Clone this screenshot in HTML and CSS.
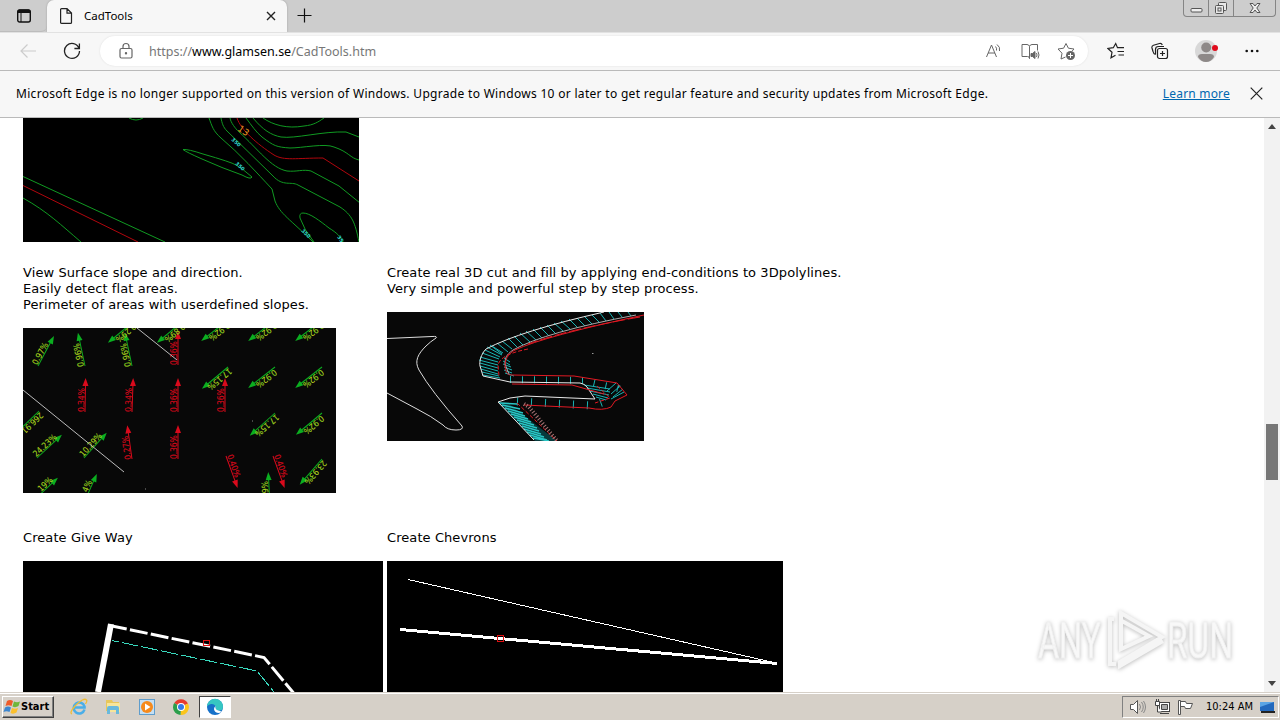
FILE: index.html
```html
<!DOCTYPE html>
<html lang="en">
<head>
  <meta charset="UTF-8">
  <meta name="viewport" content="width=device-width, initial-scale=1.0">
  <title>CadTools</title>
  <link rel="stylesheet" href="styles.css">
</head>
<body>
  <!-- Tabs -->
  <header class="tab-bar">
    <div class="tab-actions">
      <svg width="16" height="16" viewBox="0 0 16 16"><rect x="1.7" y="2" width="12.6" height="12" rx="2" fill="none" stroke="#111" stroke-width="1.4"/><path d="M1.5 5V3.5Q1.500 1.500 3.500 1.500h9q2 0 2 2V5z" fill="#111"/><path d="M5 5v9" stroke="#111"/></svg>
    </div>
    <div class="tab">
      <svg width="14" height="18" viewBox="0 0 14 18" fill="none" stroke="#222" stroke-width="1.2"><path d="M1.600 2.600q0-1 1-1H8l4.500 4.500v9.300q0 1-1 1H2.600q-1 0-1-1zM8 1.600v4.500h4.500"/></svg>
      <span class="tab-title">CadTools</span>
      <svg class="tab-close" width="10" height="10" viewBox="0 0 10 10" stroke="#222" stroke-width="1.4"><path d="M1 1l8 8M9 1l-8 8"/></svg>
    </div>
    <svg class="tab-new" width="15" height="15" viewBox="0 0 15 15" stroke="#111" stroke-width="1.2"><path d="M7.500 .5v14M.5 7.500h14"/></svg>
    <div class="window-buttons">
      <span class="win-btn"><svg width="14" height="16" viewBox="0 0 14 16"><rect x="2" y="8.500" width="11" height="3.500" rx="1" fill="#eee" stroke="#555"/></svg></span>
      <span class="win-btn"><svg width="14" height="16" viewBox="0 0 14 16" fill="#e8e8e8" stroke="#555"><rect x="4.500" y="2.500" width="8" height="8" rx="1"/><rect x="1.500" y="5.500" width="8" height="8" rx="1"/><rect x="4" y="8" width="3" height="3"/></svg></span>
      <span class="win-btn win-btn-close"><svg width="12" height="16" viewBox="0 0 12 16"><path d="M1 3.500h3l2 2.500 2-2.500h3L7.800 8l3.200 4.500H8L6 10l-2 2.500H1L4.200 8z" fill="#eee" stroke="#555"/></svg></span>
    </div>
  </header>

  <!-- Toolbar -->
  <nav class="toolbar">
    <svg class="back" width="18" height="16" viewBox="0 0 18 16" fill="none" stroke="#ccc" stroke-width="1.200"><path d="M17 8H2M8.500 1.500L2 8l6.500 6.500"/></svg>
    <svg class="reload" width="18" height="18" viewBox="0 0 18 18" fill="none" stroke="#222" stroke-width="1.300"><path d="M16 6.200A7.500 7.500 0 1 0 16.500 9M16.400 1.500v5h-5"/></svg>
    <div class="address">
      <svg width="14" height="18" viewBox="0 0 14 18" fill="none" stroke="#666" stroke-width="1.200"><rect x="1" y="6.500" width="12" height="9.500" rx="1.500"/><path d="M4 6.500V4.500a3 3 0 0 1 6 0v2"/><circle cx="7" cy="11.300" r=".6" fill="#666"/></svg>
      <span class="url">https://<b>www.glamsen.se</b>/CadTools.htm</span>
      <svg class="read-aloud" width="17" height="16" viewBox="0 0 17 16" fill="none" stroke="#666"><path d="M1.500 14L6.500 2 11.500 14M3 10h7M10.500 3.500q1.500 1.500 1 4M12 1.500q3.500 2.500 2.500 6.500"/></svg>
      <svg class="reader" width="19" height="17" viewBox="0 0 19 17" fill="none" stroke="#666"><path d="M8.500 3.500Q8 1.500 6 1.500H1v12h5.500q2 0 2 2V3.500Q9 1.500 11 1.500h5.500v6M8.500 15.500v-2"/><path d="M10 10.500h1.500L14 8.500v7l-2.500-2H10z" fill="#666"/><path d="M15.500 10q1 2 0 4M17 8.500q2 3.500 0 7"/></svg>
      <svg class="add-fav" width="19" height="19" viewBox="0 0 19 19" fill="none" stroke="#666"><path d="M8.500 15L4 17l1-5.800L1 7l5.600-.8L9 1.500l2.400 4.700L17 7l-2 2.200"/><circle cx="13.500" cy="13.500" r="4.500" fill="#666" stroke="none"/><path d="M13.500 11v5M11 13.500h5" stroke="#fff"/></svg>
    </div>
    <svg class="favorites" width="18" height="18" viewBox="0 0 18 18" fill="none" stroke="#222" stroke-width="1.200"><path d="M8.500 13.300L4 15.800l1-5.500L1 6.500l5.300-.8L8.700 1.500l1.800 4.200H17M10.500 9.500H17M11.500 13H17"/></svg>
    <svg class="collections" width="18" height="18" viewBox="0 0 18 18" fill="none" stroke="#222" stroke-width="1.200"><rect x="6.500" y="6.500" width="10" height="10" rx="2"/><path d="M11.500 9v5M9 11.500h5M4.500 12.500Q2.500 12 2 9.500L1 6q-.5-2 1.500-2.700l6-1.800q2-.5 2.800 1.500M4.500 12.500V7.500q0-3 3-3H13"/></svg>
    <svg class="profile" width="24" height="24" viewBox="0 0 24 24"><circle cx="11" cy="12" r="11" fill="#d8d8d8"/><circle cx="11.200" cy="8.500" r="5" fill="#8e8988"/><path d="M3 18q0-3 4-3h8q4 0 4 3-3 5-8 5t-8-5" fill="#8e8988"/><circle cx="20" cy="9" r="3" fill="#e00b1c"/></svg>
    <svg class="more" width="14" height="4" viewBox="0 0 14 4" fill="#111"><circle cx="1.700" cy="2" r="1.300"/><circle cx="7" cy="2" r="1.300"/><circle cx="12.300" cy="2" r="1.300"/></svg>
  </nav>

  <!-- Info bar -->
  <div class="info-bar">
    <p class="info-text">Microsoft Edge is no longer supported on this version of Windows. Upgrade to Windows 10 or later to get regular feature and security updates from Microsoft Edge.</p>
    <a class="info-link" href="#">Learn more</a>
    <svg width="13" height="13" viewBox="0 0 13 13" stroke="#222" stroke-width="1.200"><path d="M.7.7l11.600 11.600M12.300.7L.7 12.300"/></svg>
  </div>

  <!-- Web page -->
  <div class="viewport">
    <main class="page">
      <section class="feature-row">
        <svg class="cad contour" width="336" height="124" viewBox="23 118 336 124" fill="none" stroke="#109a22">
          <path d="M129 118q7 4 14 0M183 149.500q5-.5 20 4.500 28 8 33 11 7 4 16 12-1 3-10-2-20-7-40-16-16-7-19-9.500zM209 118c3 8 4 13 12 20 19 16 36 35 51 51l3 12c5 13 15 18 38 41M221 118c1 5 2 9 6 13l46 45c10 11 18 5 25 9l42 22c12 8 15 15 19 35M230 118c1 5 5 10 9 14 19 17 32 36 48 39 10 1 16-2 24 0l28 15 21 17M246 118c6 8 10 14 16 19 12 9 14 10 28 11 12 0 35-5 44-1 15 5 16 11 25 13M253 118c10 12 18 17 28 19 14 2 42-6 65-5l13 5M263 118c10 7 24 11 41 8 10-1 14-4 20-8M23 176.500l142 65.500M23 198c25 14 38 27 58 44M314 242q-10-12-14-24-1-5 3-5c7 0 17 8 26 15 8 5 11 8 14 14"/>
          <path stroke="#b0060d" d="M237 118c4 12 20 26 37 37 10 6 23 3 49 3l36 23M23 185.500L138 242"/>
          <g class="contour-label"><text transform="translate(237 130) rotate(35)" class="label-big">13</text><text transform="translate(231 140) rotate(42)">350</text><text transform="translate(235 164) rotate(42)">350</text><text transform="translate(301 231) rotate(45)">350</text><text transform="translate(337 237) rotate(55)">35</text></g>
        </svg>
      </section>

      <section class="feature-row">
        <article class="feature">
          <p>View Surface slope and direction.<br>Easily detect flat areas.<br>Perimeter of areas with userdefined slopes.</p>
          <svg class="cad slope" width="313" height="165" viewBox="23 328 313 165">
            <defs>
              <g id="arrow"><path d="M0 0H28" stroke="currentColor"/><path d="M34 0l-8-3v6z" fill="currentColor"/></g>
            </defs>
            <g class="low">
              <g transform="translate(178 365) rotate(-90)"><use href="#arrow"/><text x="0" y="-1">0.36%</text></g>
              <g transform="translate(85 412) rotate(-89)"><use href="#arrow"/><text x="0" y="-1">0.34%</text></g>
              <g transform="translate(132 412) rotate(-88)"><use href="#arrow"/><text x="0" y="-1">0.34%</text></g>
              <g transform="translate(178 412) rotate(-90)"><use href="#arrow"/><text x="0" y="-1">0.36%</text></g>
              <g transform="translate(225 412) rotate(-90)"><use href="#arrow"/><text x="0" y="-1">0.36%</text></g>
              <g transform="translate(132 459) rotate(-98)"><use href="#arrow"/><text x="0" y="-1">0.27%</text></g>
              <g transform="translate(178 459) rotate(-90)"><use href="#arrow"/><text x="0" y="-1">0.36%</text></g>
              <g transform="translate(226 456) rotate(70)"><use href="#arrow"/><text x="0" y="-1">0.40%</text></g>
              <g transform="translate(273 456) rotate(70)"><use href="#arrow"/><text x="0" y="-1">0.40%</text></g>
            </g>
            <g class="high">
              <g transform="translate(38 366) rotate(-62)"><use href="#arrow"/><text x="0" y="-1">0.97%</text></g>
              <g transform="translate(85 366) rotate(-102)"><use href="#arrow"/><text x="0" y="-1">0.96%</text></g>
              <g transform="translate(132 366) rotate(-102)"><use href="#arrow"/><text x="0" y="-1">0.96%</text></g>
              <g transform="translate(134 321) rotate(140)"><use href="#arrow"/><text x="2" y="-1">0.29%</text></g>
              <g transform="translate(183 321) rotate(140)"><use href="#arrow"/><text x="2" y="-1">0.89%</text></g>
              <g transform="translate(228 320) rotate(142)"><use href="#arrow"/><text x="2" y="-1">0.92%</text></g>
              <g transform="translate(275 320) rotate(142)"><use href="#arrow"/><text x="2" y="-1">0.92%</text></g>
              <g transform="translate(322 320) rotate(142)"><use href="#arrow"/><text x="2" y="-1">0.92%</text></g>
              <g transform="translate(228 367) rotate(140)"><use href="#arrow"/><text x="0" y="-1">17.15%</text></g>
              <g transform="translate(275 367) rotate(142)"><use href="#arrow"/><text x="2" y="-1">0.92%</text></g>
              <g transform="translate(322 367) rotate(142)"><use href="#arrow"/><text x="2" y="-1">0.92%</text></g>
              <g transform="translate(275 413) rotate(138)"><use href="#arrow"/><text x="0" y="-1">17.15%</text></g>
              <g transform="translate(322 413) rotate(140)"><use href="#arrow"/><text x="2" y="-1">0.92%</text></g>
              <g transform="translate(322 459) rotate(131)"><use href="#arrow"/><text x="0" y="-1">23.93%</text></g>
              <g transform="translate(39 411) rotate(136)"><use href="#arrow"/><text x="0" y="-1">266.91</text></g>
              <g transform="translate(37 458) rotate(-43)"><use href="#arrow"/><text x="0" y="-1">24.23%</text></g>
              <g transform="translate(84 458) rotate(-48)"><use href="#arrow"/><text x="0" y="-1">10.29%</text></g>
              <g transform="translate(33 501) rotate(-43)"><use href="#arrow"/><text x="12" y="-1">19%</text></g>
              <g transform="translate(83 505) rotate(-66)"><use href="#arrow"/><text x="13" y="-1">4%</text></g>
              <g transform="translate(270 506) rotate(-93)"><use href="#arrow"/><text x="13" y="-1">9%</text></g>
            </g>
            <path d="M137 328l40 32M23 390l101 82" stroke="#bbb" fill="none"/>
            <path d="M145 489h1M252 421h1" stroke="#888"/>
          </svg>
        </article>
        <article class="feature">
          <p>Create real 3D cut and fill by applying end-conditions to 3Dpolylines.<br>Very simple and powerful step by step process.</p>
          <svg class="cad slope" width="257" height="129" viewBox="387 312 257 129" fill="none">
            <path d="M387 338.500l45-2q6-.5 4 1.500-6 4-10 8c-8 8-12 15-7 24q12 21 43 56 2 4-6 4-9 0-13-5-12-9-26-16L387 393" stroke="#ddd"/>
            <!-- hatching between the outer and inner edges -->
            <path d="M492 346L503 353M497 343l11 9M502 341l10 8M508 338l9 9M514 336l9 9M520 333l10 9M526 331l10 9M533 329l9 9M540 327l9 9M547 325l9 9M554 323l9 8M561 321l9 8M569 319l8 8M577 318l8 8M584 316l8 8M592 315l7 7M600 313l6 8M609 312l5 7M618 312l4 5M628 312l3 4" stroke="#19b4b4"/>
            <path d="M482 353L499 359M480 357l18 5M479 360l19 5M480 363l18 5M480 366l18 5M481 369l17 5M482 372l17 4M483 375l17 3M485 350l15 7M487 347l15 8M490 345l12 9M504 358l6 4M503 361l7 4M503 364l8 3M504 367l8 3M504 370l8 3M505 373l9 3" stroke="#19b4b4"/>
            <path d="M510 379.500l73 1 35 8 5 6" stroke="#19b4b4" stroke-width="7" stroke-dasharray="1 11"/>
            <path d="M517 401.500l77 4 16-6" stroke="#19b4b4" stroke-width="8" stroke-dasharray="1 13"/>
            <path d="M584 385l26 4M587 388l23 4M590 391l19 4M593 394l15 4M596 397l10 3M607 391l9-8M611 394l9-8M613 397l10-8M611 399l13-7" stroke="#19b4b4"/>
            <path d="M498 402L508 403 557 441H535z" fill="#073b3d"/>
            <path d="M499 403l18 1M502 405l18 4M505 408l18 5M508 411l17 5M511 414l17 5M514 417l17 5M517 420l17 5M519 423l18 5M522 426l17 5M524 429l17 5M527 432l17 5M530 435l17 5M533 438l16 3" stroke="#28c5c4" stroke-width="1.500"/>
            <path d="M604 312Q520 331 486 349c-5 5-7 13-6 17l3 10 27 6" stroke="#e9e9e9"/>
            <path d="M510 382l70 1q5 1 7 4l8 12-70-3-15 2-12 4 36 38" stroke="#e9e9e9"/>
            <path d="M636 315Q545 332 513 350c-7 5-8 8-8 14l4 10" stroke="#aaa"/>
            <path d="M644 315Q545 336 515 350c-8 4-10 11-10 16 1 8 3 9 7 9l62 1 37 6 6 1 10 12-12 6-4 6q-8 4-22 1l-65-3M512 384l60 1 32 9" stroke="#e01923"/>
            <path d="M640 317Q570 329 528 344" stroke="#e01923" stroke-dasharray="12 3"/>
            <path d="M528 349c-20 4-28 9-30 16l1 11M517 403l40 38M597 386l13 12-15 5" stroke="#e01923" stroke-dasharray="4 2"/>
            <path d="M524 404l5 3 28 34" stroke="#a77" stroke-width="4" stroke-dasharray="1 2"/>
            <path d="M592 353.500h1.500" stroke="#999"/>
          </svg>
        </article>
      </section>

      <section class="feature-row feature-row-last">
        <article class="feature">
          <p>Create Give Way</p>
          <svg class="cad" width="360" height="131" viewBox="23 561 360 131" fill="none">
            <path d="M111 624l-13 68" stroke="#fff" stroke-width="6"/>
            <path d="M112 626L264 657.500l30 36" stroke="#fff" stroke-width="3" stroke-dasharray="18 3.300" stroke-dashoffset="3"/>
            <path d="M112 640.500L257 671l17 21" stroke="#38d8bd" stroke-dasharray="17 3" stroke-dashoffset="10" shape-rendering="crispEdges"/>
            <rect x="203.500" y="640.500" width="6" height="5" stroke="#d11"/>
          </svg>
        </article>
        <article class="feature">
          <p>Create Chevrons</p>
          <svg class="cad" width="396" height="131" viewBox="387 561 396 131" fill="none">
            <path d="M408 579.500l368 83.500" stroke="#fff" shape-rendering="crispEdges"/>
            <path d="M400 629.500l377 34" stroke="#fff" stroke-width="3" shape-rendering="crispEdges"/>
            <rect x="497.500" y="635.500" width="6" height="6" stroke="#d11"/>
          </svg>
        </article>
      </section>
    </main>
    <aside class="scrollbar">
      <span class="scroll-up"></span>
      <span class="scroll-thumb"></span>
      <span class="scroll-down"></span>
    </aside>
    <svg class="watermark" width="210" height="76" viewBox="1030 604 210 76" fill="none">
      <g class="watermark-text"><text x="1038" y="658" textLength="63" lengthAdjust="spacingAndGlyphs">ANY</text><text x="1167" y="658" textLength="66" lengthAdjust="spacingAndGlyphs">RUN</text></g>
      <path class="watermark-mark" d="M1121 649V613l41 24-42 25v4l43-25M1121 613v36l28-13-27-15M1114 619h-4v45h6"/>
    </svg>
  </div>

  <!-- Taskbar -->
  <footer class="taskbar">
    <button class="start">
      <svg width="18" height="17" viewBox="0 0 18 17"><path d="M4 3q3-2 6 0L8.500 8q-3-1.500-6 0z" fill="#ef5b2a"/><path d="M11 3.500q3 1.500 6 0L15.500 8q-3 2-6 .5z" fill="#6fb73c"/><path d="M2 9.500q3-2 6 0L6.500 14q-3-1.500-6 0z" fill="#3d86cf"/><path d="M9 10q3 1.500 6 0l-1.500 4.500q-3 2-6 .5z" fill="#fbc02d"/></svg>
      Start
    </button>
    <div class="quick-launch">
      <svg width="18" height="18" viewBox="0 0 18 18" fill="none"><path d="M14.500 11.500A5.500 5.500 0 1 1 14.500 8.500v1H5" stroke="#4aaee8" stroke-width="2.600"/><path d="M2 16Q-1 15 5 8 14-1 16.500 2q1 1-1 4" stroke="#f0bd35" stroke-width="1.300"/></svg>
      <svg width="18" height="18" viewBox="0 0 18 18"><path d="M2 2h6l1 2h6v9H2z" fill="#e8c75b"/><path d="M3 5h13v9H3z" fill="#f7e59a"/><path d="M3 10q0-2 2-2h8q2 0 2 2v6h-3v-4H6v4H3z" fill="#69b9dc"/></svg>
      <svg width="18" height="18" viewBox="0 0 18 18"><rect x="1.500" y="1.500" width="15" height="15" fill="#c5dff3" stroke="#5f9dcc"/><circle cx="9" cy="9" r="6" fill="#f68a1c"/><path d="M7 5.500L12.500 9 7 12.500z" fill="#fff"/></svg>
      <svg width="18" height="18" viewBox="0 0 18 18"><path d="M9 9L2.200 5A7.900 7.900 0 0 1 16 5.500z" fill="#e63c2f"/><path d="M9 9l7-3.500A7.900 7.900 0 0 1 8.500 17z" fill="#fbc51b"/><path d="M9 9l-.5 8A7.900 7.900 0 0 1 2.200 5z" fill="#2b9e4b"/><circle cx="9" cy="9" r="4" fill="#fff"/><circle cx="9" cy="9" r="3" fill="#347be8"/></svg>
      <span class="task-active">
        <svg width="18" height="18" viewBox="0 0 18 18"><circle cx="9" cy="9" r="8" fill="#1671c9"/><path d="M1 8.500A8 8 0 0 1 17 9q-.5 4-4.500 3.500-4 0-2.500-3-1-4-5-3.500-3 .5-4 2.500" fill="#36c7c2"/><path d="M9.500 8q-3 3 0 6 3 2 6 0-1-1.500-3-1.500-3.500-.5-3-4.500" fill="#fff"/></svg>
      </span>
    </div>
    <div class="tray">
      <svg width="18" height="16" viewBox="0 0 18 16" fill="#fff" stroke="#555"><path d="M1.500 5.500h3l4-4v13l-4-4h-3z"/><path d="M10.500 5q2 3 0 6M12.500 3q3.500 5 0 10M14.500 2q4 6 0 12" fill="none" stroke="#888"/></svg>
      <svg width="16" height="16" viewBox="0 0 16 16" fill="#fff" stroke="#444"><rect x="5.500" y="3.500" width="10" height="9"/><path d="M7.500 5.500h6v5h-6z" fill="#aaa"/><path d="M6 14.500h9M1.500 2.500h4v4h-4zM2.500 0v3M4.500 0v3M3.500 7v6h4"/></svg>
      <svg width="16" height="16" viewBox="0 0 16 16" fill="#fff" stroke="#555"><path d="M1.500 1.500h2v14h-2zM3.500 2.500h5l1 2h6l-2 5h-5l-1-2h-4z"/></svg>
      <span class="clock">10:24 AM</span>
      <svg width="15" height="14" viewBox="0 0 15 14"><path d="M0 2h14v9H0z" fill="#2369bd"/><path d="M0 2h14L0 7z" fill="#5ba5e5"/><path d="M1 12h14" stroke="#222" stroke-width="2"/></svg>
    </div>
  </footer>
</body>
</html>
```
FILE: styles.css
```css
:root {
  --chrome: #f7f7f7;
  --tabs: #cdcdcd;
  --taskbar: #d6d0c8;
  --ui-font: "Noto Sans", "Open Sans", sans-serif;
}
* {
  margin: 0;
  padding: 0;
  box-sizing: border-box;
}
body {
  width: 1280px;
  height: 720px;
  overflow: hidden;
  display: flex;
  flex-direction: column;
  background: #fff;
  font-family: var(--ui-font);
  color: #000;
}
svg {
  display: block;
  flex: none;
}
.tab-bar {
  height: 32px;
  flex: none;
  display: flex;
  background: var(--tabs);
}
.tab-actions {
  width: 47px;
  padding: 8px 0 0 16px;
  border-bottom: 1px solid #bdbdbd;
  border-bottom-right-radius: 6px;
}
.tab {
  width: 240px;
  height: 32px;
  display: flex;
  align-items: center;
  padding: 0 11px 0 12px;
  background: var(--chrome);
  border-radius: 7px 7px 0 0;
  box-shadow: 0 0 2px #999;
  clip-path: inset(0 -3px 0 -3px);
}
.tab-title {
  margin-left: 11px;
  padding-bottom: 2px;
  font-size: 11.5px;
}
.tab-close {
  margin-left: auto;
}
.tab-new {
  margin: 8px 0 0 10px;
}
.window-buttons {
  display: flex;
  height: 17px;
  margin: 0 4px 0 auto;
  border: 1px solid #858585;
  border-top: 0;
  border-radius: 0 0 4px 4px;
}
.win-btn {
  width: 25px;
  display: flex;
  justify-content: center;
  border-right: 1px solid #858585;
}
.win-btn-close {
  width: 41px;
  border-right: 0;
}
.toolbar {
  height: 39px;
  flex: none;
  display: flex;
  align-items: center;
  padding-bottom: 1px;
  background: var(--chrome);
  border-top: 1px solid #e2e2e2;
  border-bottom: 1px solid #bababa;
}
.back {
  margin-left: 19px;
}
.reload {
  margin-left: 26px;
}
.address {
  width: 988px;
  height: 30px;
  margin-left: 19px;
  padding: 0 12px 0 19px;
  display: flex;
  align-items: center;
  background: #fff;
  border-radius: 16px;
  box-shadow: 0 0 2px #ddd;
}
.url {
  margin-left: 16px;
  font-size: 12.5px;
  color: #777;
}
.url b {
  font-weight: 400;
  color: #000;
}
.read-aloud {
  margin-left: auto;
}
.reader {
  margin-left: 19px;
}
.add-fav {
  margin-left: 17px;
}
.favorites {
  margin-left: 19px;
}
.collections {
  margin-left: 26px;
}
.profile {
  margin-left: 26px;
}
.more {
  margin-left: 26px;
}
.info-bar {
  height: 47px;
  flex: none;
  display: flex;
  align-items: center;
  padding: 0 17px 1px 16px;
  background: var(--chrome);
  border-bottom: 1px solid #bababa;
  font-size: 12px;
}
.info-text {
  padding-bottom: 1px;
  letter-spacing: 0.305px;
  white-space: nowrap;
}
.info-link {
  margin: 0 20px 0 auto;
  padding-bottom: 1px;
  letter-spacing: 0.2px;
  color: #0067b0;
}
.viewport {
  position: relative;
  height: 574px;
  flex: none;
  display: flex;
  overflow: hidden;
}
.page {
  flex: 1;
  padding-left: 23px;
  font-family: Verdana, "DejaVu Sans", sans-serif;
  font-size: 13px;
  letter-spacing: 0.08px;
  line-height: 16px;
}
.feature-row {
  display: grid;
  grid-template-columns: 360px 1fr;
  column-gap: 4px;
  align-items: start;
  margin-bottom: 22px;
}
.feature-row + .feature-row {
  margin-bottom: 36px;
}
.feature p {
  padding-top: 1px;
  margin-bottom: 15px;
  white-space: nowrap;
}
.cad {
  background: #000;
}
.slope {
  background: #080808;
}
.contour-label {
  font: bold 5px "DejaVu Sans", sans-serif;
  fill: #30d5d0;
  stroke: none;
}
.label-big {
  font-size: 9px;
  font-weight: 400;
  fill: #e79b20;
}
.slope text {
  font: 8.5px "DejaVu Sans Condensed", "DejaVu Sans", sans-serif;
  letter-spacing: -0.1px;
  stroke: currentColor;
  stroke-width: 0.15px;
}
.low {
  color: #d90a1c;
  fill: #c90718;
}
.high {
  color: #0bae20;
  fill: #dadb1c;
}
.scrollbar {
  width: 16px;
  display: flex;
  flex-direction: column;
  align-items: center;
  background: #f2f2f2;
}
.scroll-up,
.scroll-down {
  border: 4px solid transparent;
}
.scroll-up {
  margin-top: 2px;
  border-bottom: 5px solid #444;
}
.scroll-thumb {
  width: 12px;
  height: 56px;
  margin-top: 295px;
  background: #777;
}
.scroll-down {
  margin: auto 0 2px;
  border-top: 5px solid #444;
}
.watermark {
  position: absolute;
  left: 1030px;
  top: 486px;
  filter: drop-shadow(0 1px 2px #bbb);
}
.watermark-text {
  font: 50px "Roboto", sans-serif;
  fill: #f8f8f8;
  stroke: #f0f0f0;
}
.watermark-mark {
  stroke: #f5f5f5;
  stroke-width: 4;
}
.taskbar {
  height: 28px;
  flex: none;
  display: flex;
  align-items: center;
  background: var(--taskbar);
  border-top: 1px solid #d6d0c8;
  box-shadow: inset 0 1px #fff;
  font-family: Tahoma, "DejaVu Sans Condensed", "DejaVu Sans", sans-serif;
}
.start {
  width: 52px;
  height: 22px;
  margin-left: 2px;
  display: flex;
  align-items: center;
  background: var(--taskbar);
  border: 1px solid;
  border-color: #fff #404040 #404040 #fff;
  box-shadow: inset -1px -1px #808080;
  font: bold 11px Tahoma, "DejaVu Sans Condensed", "DejaVu Sans", sans-serif;
  white-space: nowrap;
}
.quick-launch {
  display: flex;
  align-items: center;
  gap: 16px;
  margin-left: 16px;
}
.task-active {
  width: 32px;
  height: 22px;
  margin-left: -7px;
  padding: 1px 6px;
  background: #fff;
  border: 1px solid;
  border-color: #404040 #fff #fff #404040;
}
.tray {
  height: 22px;
  width: 157px;
  margin: 0 1px 0 auto;
  padding: 0 3px 0 6px;
  display: flex;
  align-items: center;
  gap: 7px;
  border: 1px solid;
  border-color: #808080 #fff #fff #808080;
}
.clock {
  margin-left: auto;
  font-size: 11px;
  white-space: nowrap;
}
```
